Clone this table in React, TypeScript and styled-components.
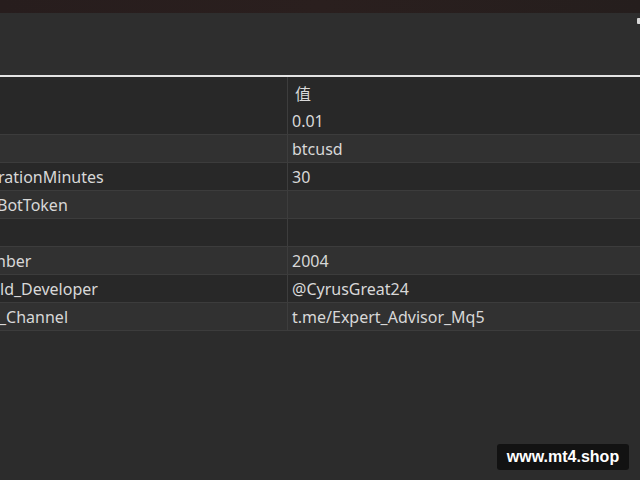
import React from "react";
import styled, { createGlobalStyle } from "styled-components";

const Global = createGlobalStyle`
  html, body { margin: 0; padding: 0; background: #2c2c2c; }
  body { width: 640px; height: 480px; overflow: hidden; font-family: "Noto Sans", "Noto Sans CJK SC", sans-serif; }
`;

const Page = styled.div`
  position: relative;
  width: 640px;
  height: 480px;
  display: flex;
  flex-direction: column;
  background: #2c2c2c;
`;

const TopStrip = styled.div`
  height: 13px;
  background: linear-gradient(90deg, #271d1d 0%, #2a1f1e 50%, #251e1d 100%);
`;

const Toolbar = styled.div`
  height: 62px;
  background: #2e2e2e;
  display: flex;
  justify-content: flex-end;
  align-items: flex-start;
  padding-top: 5px;
  box-sizing: border-box;
`;

const EdgeMark = styled.div`
  width: 3px;
  height: 6px;
  background: #d8d8d8;
  border-radius: 1px 0 0 1px;
`;

const Table = styled.div`
  border-top: 2px solid #e4e4e4;
  display: flex;
  flex-direction: column;
`;

const Row = styled.div<{ $tone: "dark" | "light"; $head?: boolean; $line?: boolean }>`
  display: grid;
  grid-template-columns: 288px 1fr;
  height: ${(p) => (p.$head ? "30px" : "28px")};
  box-sizing: border-box;
  background: ${(p) => (p.$tone === "dark" ? "#282828" : "#313131")};
  border-bottom: ${(p) => (p.$line ? "1px solid #3c3c3c" : "none")};
`;

const NameCell = styled.div`
  border-right: 1px solid #3d3d3d;
  overflow: hidden;
  display: flex;
  align-items: center;
  white-space: nowrap;
  padding-top: 1px;
`;

const NameText = styled.span<{ $shift: number }>`
  margin-left: ${(p) => p.$shift}px;
  color: #d8d8d8;
  font-size: 16px;
`;

const ValueCell = styled.div<{ $pad: number }>`
  display: flex;
  align-items: center;
  padding-left: ${(p) => p.$pad}px;
  padding-top: 1px;
  color: #d8d8d8;
  font-size: 16px;
  white-space: nowrap;
`;

const Watermark = styled.div`
  position: absolute;
  left: 497px;
  top: 444px;
  width: 132px;
  height: 26px;
  background: #121212;
  border-radius: 3px;
  display: flex;
  align-items: center;
  justify-content: center;
  color: #ffffff;
  font-family: "Liberation Sans", Arial, sans-serif;
  font-weight: bold;
  font-size: 16px;
`;

const rows: { name: string; shift: number; value: string; tone: "dark" | "light" }[] = [
  { name: "", shift: 0, value: "0.01", tone: "dark" },
  { name: "", shift: 0, value: "btcusd", tone: "light" },
  { name: "rationMinutes", shift: -2, value: "30", tone: "dark" },
  { name: "BotToken", shift: -3, value: "", tone: "light" },
  { name: "", shift: 0, value: "", tone: "dark" },
  { name: "nber", shift: -4, value: "2004", tone: "light" },
  { name: "ld_Developer", shift: 0, value: "@CyrusGreat24", tone: "dark" },
  { name: "_Channel", shift: -1, value: "t.me/Expert_Advisor_Mq5", tone: "light" },
];

export default function App() {
  return (
    <Page>
      <Global />
      <TopStrip />
      <Toolbar>
        <EdgeMark />
      </Toolbar>
      <Table>
        <Row $tone="dark" $head>
          <NameCell />
          <ValueCell $pad={7}>值</ValueCell>
        </Row>
        {rows.map((r, i) => (
          <Row key={i} $tone={r.tone} $line>
            <NameCell>
              <NameText $shift={r.shift}>{r.name}</NameText>
            </NameCell>
            <ValueCell $pad={4}>{r.value}</ValueCell>
          </Row>
        ))}
      </Table>
      <Watermark>www.mt4.shop</Watermark>
    </Page>
  );
}
